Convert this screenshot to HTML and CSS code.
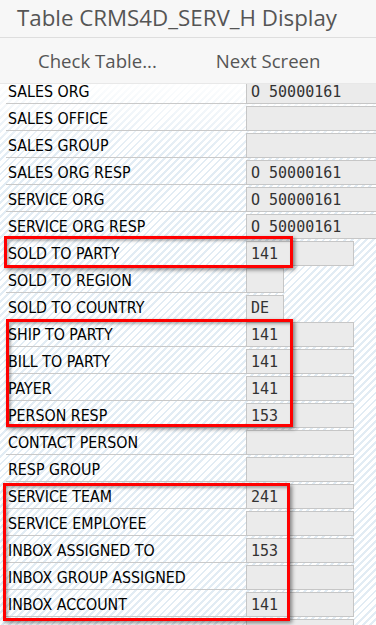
FILE: index.html
```html
<!DOCTYPE html>
<html>
<head>
<meta charset="utf-8">
<link rel="stylesheet" href="styles.css">
</head>
<body>
<div class="app">
  <header class="titlebar">Table CRMS4D_SERV_H Display</header>
  <nav class="toolbar">
    <span class="tool">Check Table...</span>
    <span class="tool">Next Screen</span>
  </nav>
  <main class="scroll">
    <div class="list">
      <div class="row"><span class="label">SALES ORG</span><span class="val wide">O 50000161</span></div>
      <div class="row"><span class="label">SALES OFFICE</span><span class="val wide"></span></div>
      <div class="row"><span class="label">SALES GROUP</span><span class="val wide"></span></div>
      <div class="row"><span class="label">SALES ORG RESP</span><span class="val wide">O 50000161</span></div>
      <div class="row"><span class="label">SERVICE ORG</span><span class="val wide">O 50000161</span></div>
      <div class="row"><span class="label">SERVICE ORG RESP</span><span class="val wide">O 50000161</span></div>
      <div class="row"><span class="label">SOLD TO PARTY</span><span class="val">141</span></div>
      <div class="row"><span class="label">SOLD TO REGION</span><span class="val short"></span></div>
      <div class="row"><span class="label">SOLD TO COUNTRY</span><span class="val short">DE</span></div>
      <div class="row"><span class="label">SHIP TO PARTY</span><span class="val">141</span></div>
      <div class="row"><span class="label">BILL TO PARTY</span><span class="val">141</span></div>
      <div class="row"><span class="label">PAYER</span><span class="val">141</span></div>
      <div class="row"><span class="label">PERSON RESP</span><span class="val">153</span></div>
      <div class="row"><span class="label">CONTACT PERSON</span><span class="val"></span></div>
      <div class="row"><span class="label">RESP GROUP</span><span class="val"></span></div>
      <div class="row"><span class="label">SERVICE TEAM</span><span class="val">241</span></div>
      <div class="row"><span class="label">SERVICE EMPLOYEE</span><span class="val"></span></div>
      <div class="row"><span class="label">INBOX ASSIGNED TO</span><span class="val">153</span></div>
      <div class="row"><span class="label">INBOX GROUP ASSIGNED</span><span class="val"></span></div>
      <div class="row"><span class="label">INBOX ACCOUNT</span><span class="val">141</span></div>
      <div class="row"><span class="label"></span><span class="val"></span></div>
    </div>
    <div class="mark m1"></div>
    <div class="mark m2"></div>
    <div class="mark m3"></div>
  </main>
</div>
</body>
</html>
```

FILE: styles.css
```css
html, body {
  margin: 0;
  padding: 0;
  background: #f7f7f7;
}
.app {
  width: 376px;
  height: 625px;
  display: flex;
  flex-direction: column;
  overflow: hidden;
  background: #f7f7f7;
}
.titlebar {
  height: 35px;
  border-bottom: 1px solid #dedede;
  padding-left: 17px;
  padding-bottom: 2px;
  display: flex;
  align-items: center;
  font-family: "Open Sans", sans-serif;
  font-size: 22.3px;
  color: #555;
  box-sizing: content-box;
}
.toolbar {
  height: 45px;
  display: flex;
  align-items: center;
  gap: 59px;
  padding-left: 38px;
  font-family: "Open Sans", sans-serif;
  font-size: 18.6px;
  color: #555;
}
.scroll {
  position: relative;
  flex: 1;
  overflow: hidden;
  background:
    linear-gradient(rgba(255,255,255,0.9), rgba(255,255,255,0) 70px),
    repeating-linear-gradient(135deg, #ffffff 0 3px, #e2ecf4 3px 5px);
  border-top: 1px solid #e8e8e8;
}
.list {
  margin-top: -5px;
  padding-left: 6px;
  display: flex;
  flex-direction: column;
  gap: 2px;
}
.row {
  display: flex;
  height: 25px;
}
.label {
  flex: 0 0 240px;
  box-sizing: border-box;
  border-bottom: 1px solid #c9c9c9;
  padding-left: 2px;
  display: flex;
  align-items: center;
  font-family: "DejaVu Sans Condensed", "DejaVu Sans", sans-serif;
  font-size: 15.8px;
  color: #000;
  white-space: nowrap;
}
.val {
  flex: 0 0 108px;
  box-sizing: border-box;
  background: #ebebeb;
  border: 1px solid #c6c6c6;
  padding-left: 4px;
  display: flex;
  align-items: center;
  font-family: "DejaVu Sans Mono", monospace;
  font-size: 15px;
  color: #333;
  white-space: nowrap;
}
.val.wide {
  flex-basis: 140px;
  border-right: none;
}
.val.short {
  flex-basis: 38px;
}
.mark {
  position: absolute;
  border: 3px solid #f00;
  box-sizing: border-box;
  box-shadow: 2px 2px 4px rgba(0,0,0,0.45), inset 2px 2px 3px rgba(0,0,0,0.3);
}
.m1 { left: 4px; top: 152px; width: 289px; height: 32px; }
.m2 { left: 6px; top: 235px; width: 287px; height: 108px; }
.m3 { left: 3px; top: 399px; width: 287px; height: 138px; }
```
